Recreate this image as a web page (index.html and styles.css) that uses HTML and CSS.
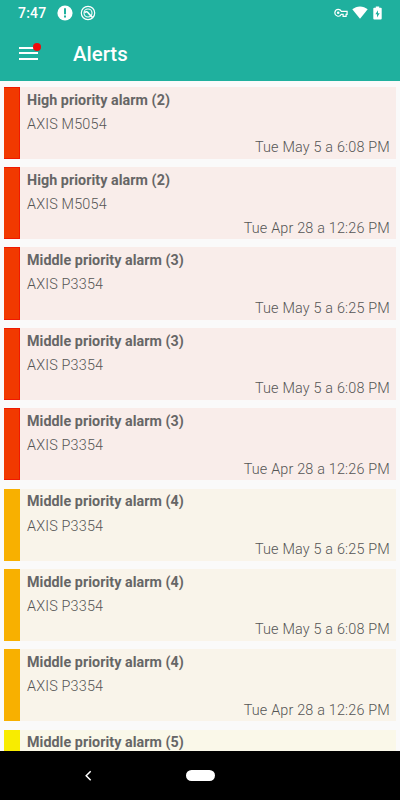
FILE: index.html
```html
<!DOCTYPE html>
<html lang="en">
<head>
    <meta charset="UTF-8">
    <meta name="viewport" content="width=device-width, initial-scale=1.0">
    <title>Alerts</title>
    <link rel="stylesheet" href="styles.css">
</head>
<body>

    <header>
        <div class="statusbar">
            <span class="clock">7:47</span>
            <svg class="notice" viewBox="0 0 16 16">
                <circle cx="8" cy="8" r="7.6" fill="#fff"/>
                <path d="M7 3.2h2v6H7zM7 10.6h2v2H7z" fill="#1fb09e"/>
            </svg>
            <svg class="sync" viewBox="0 0 16 16" fill="none" stroke="#fff">
                <circle cx="8" cy="8" r="6.7" stroke-width="1.2"/>
                <circle cx="8" cy="8" r="4" stroke-width="1.1"/>
                <path d="M4.6 7.6C6.2 6.2 7.4 6.7 8.2 7.9S10 10 12.6 12.4" stroke-width="1.6"/>
            </svg>
            <div class="status-icons">
                <svg class="key" viewBox="0 0 14 10">
                    <path d="M4.2 1.4a3.4 3.4 0 1 0 3.1 4.9h1.8v2h3v-2h1V3.3H7.3A3.4 3.4 0 0 0 4.2 1.4z" fill="none" stroke="#fff" stroke-width="1.2"/>
                    <circle cx="4.2" cy="4.8" r="1.3" fill="#fff"/>
                </svg>
                <svg class="wifi" viewBox="0 0 16 13">
                    <path d="M8 12.8.3 3.3C4.6-.6 11.4-.6 15.7 3.3z" fill="#fff"/>
                </svg>
                <svg class="battery" viewBox="0 0 9 14">
                    <path d="M2.8.4h3.4v1.3h1.6q.9 0 .9.9v10q0 .9-.9.9H1.2q-.9 0-.9-.9v-10q0-.9.9-.9h1.6z" fill="#fff"/>
                    <path d="M5 4.2 2.4 8.2H4v3.2l2.7-4.2H5z" fill="#1fb09e"/>
                </svg>
            </div>
        </div>
        <div class="toolbar">
            <div class="menu">
                <span></span>
                <span></span>
                <span></span>
                <i class="badge"></i>
            </div>
            <h1>Alerts</h1>
        </div>
    </header>

    <main>
        <article class="high">
            <h2>High priority alarm (2)</h2>
            <p>AXIS M5054</p>
            <p class="date">Tue May 5 a 6:08 PM</p>
        </article>
        <article class="high">
            <h2>High priority alarm (2)</h2>
            <p>AXIS M5054</p>
            <p class="date">Tue Apr 28 a 12:26 PM</p>
        </article>
        <article class="high">
            <h2>Middle priority alarm (3)</h2>
            <p>AXIS P3354</p>
            <p class="date">Tue May 5 a 6:25 PM</p>
        </article>
        <article class="high">
            <h2>Middle priority alarm (3)</h2>
            <p>AXIS P3354</p>
            <p class="date">Tue May 5 a 6:08 PM</p>
        </article>
        <article class="high">
            <h2>Middle priority alarm (3)</h2>
            <p>AXIS P3354</p>
            <p class="date">Tue Apr 28 a 12:26 PM</p>
        </article>
        <article class="middle">
            <h2>Middle priority alarm (4)</h2>
            <p>AXIS P3354</p>
            <p class="date">Tue May 5 a 6:25 PM</p>
        </article>
        <article class="middle">
            <h2>Middle priority alarm (4)</h2>
            <p>AXIS P3354</p>
            <p class="date">Tue May 5 a 6:08 PM</p>
        </article>
        <article class="middle">
            <h2>Middle priority alarm (4)</h2>
            <p>AXIS P3354</p>
            <p class="date">Tue Apr 28 a 12:26 PM</p>
        </article>
        <article class="low">
            <h2>Middle priority alarm (5)</h2>
        </article>
    </main>

    <footer>
        <svg class="back" viewBox="0 0 8 12">
            <path d="M6.7 1.3 2.2 5.8l4.5 4.5" fill="none" stroke="#fff" stroke-width="1.5"/>
        </svg>
        <div class="home"></div>
    </footer>

</body>
</html>
```

FILE: styles.css
```css
* {
    box-sizing: border-box;
}

body {
    margin: 0;
    height: 800px;
    display: flex;
    flex-direction: column;
    overflow: hidden;
    background-color: #fafafa;
    font-family: Roboto, sans-serif;
}

svg {
    display: block;
}

header {
    height: 81px;
    flex: none;
    background-color: #1fb09e;
    color: white;
}

.statusbar {
    height: 25px;
    display: flex;
    align-items: center;
    padding: 0 18px 0 18px;
}

.clock {
    width: 39px;
    font-size: 14px;
    font-weight: 500;
    line-height: 24px;
    letter-spacing: 0.2px;
}

.notice {
    width: 16px;
    height: 16px;
}

.sync {
    width: 16px;
    height: 16px;
    margin-left: 7px;
}

.status-icons {
    display: flex;
    align-items: center;
    margin-left: auto;
}

.key {
    width: 14px;
    height: 10px;
}

.wifi {
    width: 16px;
    height: 13px;
    margin-left: 4px;
}

.battery {
    width: 9px;
    height: 14px;
    margin-left: 5px;
}

.toolbar {
    height: 56px;
    display: flex;
    align-items: center;
    padding-left: 19px;
}

.menu {
    position: relative;
    width: 19px;
    height: 13px;
    display: flex;
    flex-direction: column;
    justify-content: space-between;
}

.menu span {
    height: 2px;
    background-color: white;
}

.badge {
    position: absolute;
    top: -4px;
    right: -3px;
    width: 8px;
    height: 8px;
    border-radius: 50%;
    background-color: #ee0a0a;
}

h1 {
    margin: 2px 0 0 35px;
    font-size: 20.4px;
    font-weight: 500;
    line-height: 24px;
}

main {
    flex: 1;
    min-height: 0;
    overflow: hidden;
    display: flex;
    flex-direction: column;
    gap: 8.2px;
    padding: 5.8px 4px 0;
}

article {
    height: 72.16px;
    flex: none;
    display: grid;
    grid-template-columns: 16px 1fr;
    grid-template-rows: 25px 24px minmax(0, 1fr);
    column-gap: 7px;
    padding-right: 6px;
    color: #555;
}

/* coloured strip on the left */
article::before {
    content: "";
    grid-row: 1 / 4;
}

.high {
    background-color: #f9edea;
}

.high::before {
    background-color: #f13900;
    border: 1px solid #f01800;
    border-left: none;
}

.middle {
    background-color: #f9f4ea;
}

.middle::before {
    background-color: #f8b000;
}

.low {
    background-color: #faf8e9;
}

.low::before {
    background-color: #f8ec00;
}

h2 {
    margin: 0;
    padding-top: 0.8px;
    font-size: 14.3px;
    font-weight: 700;
    line-height: 24px;
    letter-spacing: 0.05px;
    color: #666;
}

p {
    margin: 0;
    grid-column: 2;
    padding-top: 1px;
    font-size: 14.4px;
    font-weight: 300;
    line-height: 24px;
    letter-spacing: 0.18px;
}

.date {
    padding-top: 0.6px;
    text-align: right;
}

footer {
    height: 49px;
    flex: none;
    display: flex;
    align-items: center;
    padding-left: 84px;
    background-color: black;
}

.back {
    width: 8px;
    height: 12px;
}

.home {
    width: 29px;
    height: 11px;
    margin-left: 94px;
    border-radius: 6px;
    background-color: white;
}
```
